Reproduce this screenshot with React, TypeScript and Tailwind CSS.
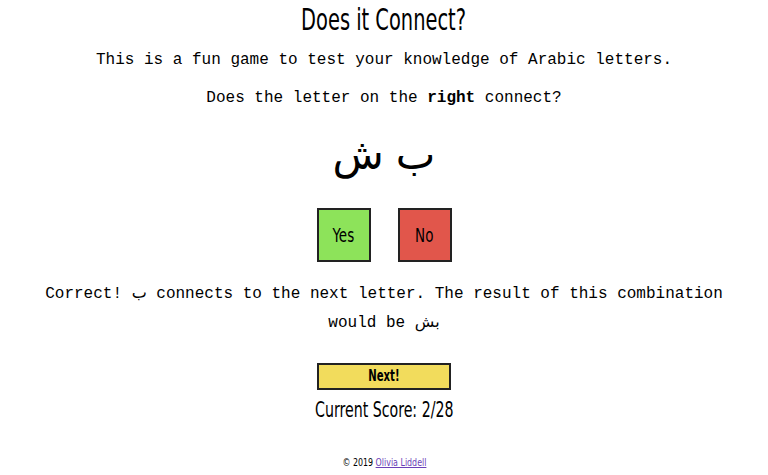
const mono = "font-['Liberation_Mono','DejaVu_Sans_Mono',monospace]";
const narrow = "font-['DejaVu_Sans_Condensed','DejaVu_Sans',sans-serif]";
const arabic = "font-['DejaVu_Sans','Noto_Sans',sans-serif]";

export default function App() {
  return (
    <div className="flex min-h-[475px] flex-col items-center bg-white px-6 text-center text-black">
      <h1 className={`${narrow} inline-block scale-x-[0.72] text-[30px] leading-[40px] font-medium`}>
        Does it Connect?
      </h1>

      <p className={`${mono} mt-2 text-base leading-6`}>
        This is a fun game to test your knowledge of Arabic letters.
      </p>
      <p className={`${mono} mt-[14px] text-base leading-6`}>
        Does the letter on the <b>right</b> connect?
      </p>

      <div dir="rtl" className={`${arabic} mt-[18px] flex h-[54px] items-center gap-3 text-[42px] leading-none`}>
        <span>ب</span>
        <span>ش</span>
      </div>

      <div className={`${narrow} mt-[26px] flex gap-[27px]`}>
        <button className="flex h-[54px] w-[54px] items-center justify-center border-2 border-[#222] bg-[#8de35a]">
          <span className="inline-block scale-x-[0.75] text-[20px] font-medium">Yes</span>
        </button>
        <button className="flex h-[54px] w-[54px] items-center justify-center border-2 border-[#222] bg-[#e1564b]">
          <span className="inline-block scale-x-[0.75] text-[20px] font-medium">No</span>
        </button>
      </div>

      <p className={`${mono} mt-[17px] text-base leading-7`}>
        Correct! <span className={arabic}>ب</span> connects to the next letter. The result of this combination would be{" "}
        <span className={arabic}>بش</span>
      </p>

      <button
        className={`${narrow} mt-[26px] flex h-[27px] w-[134px] items-center justify-center border-2 border-[#222] bg-[#f2dc5c]`}
      >
        <span className="inline-block scale-x-[0.75] text-[15px] font-bold">Next!</span>
      </button>

      <p className={`${narrow} mt-[6px] inline-block scale-x-[0.75] text-[21px] leading-7`}>
        Current Score: 2/28
      </p>

      <footer className={`${narrow} mt-[31px] inline-block scale-x-[0.8] text-[11px] leading-4`}>
        © 2019{" "}
        <a href="#" className="text-[#6b3fb8] underline">
          Olivia Liddell
        </a>
      </footer>
    </div>
  );
}
